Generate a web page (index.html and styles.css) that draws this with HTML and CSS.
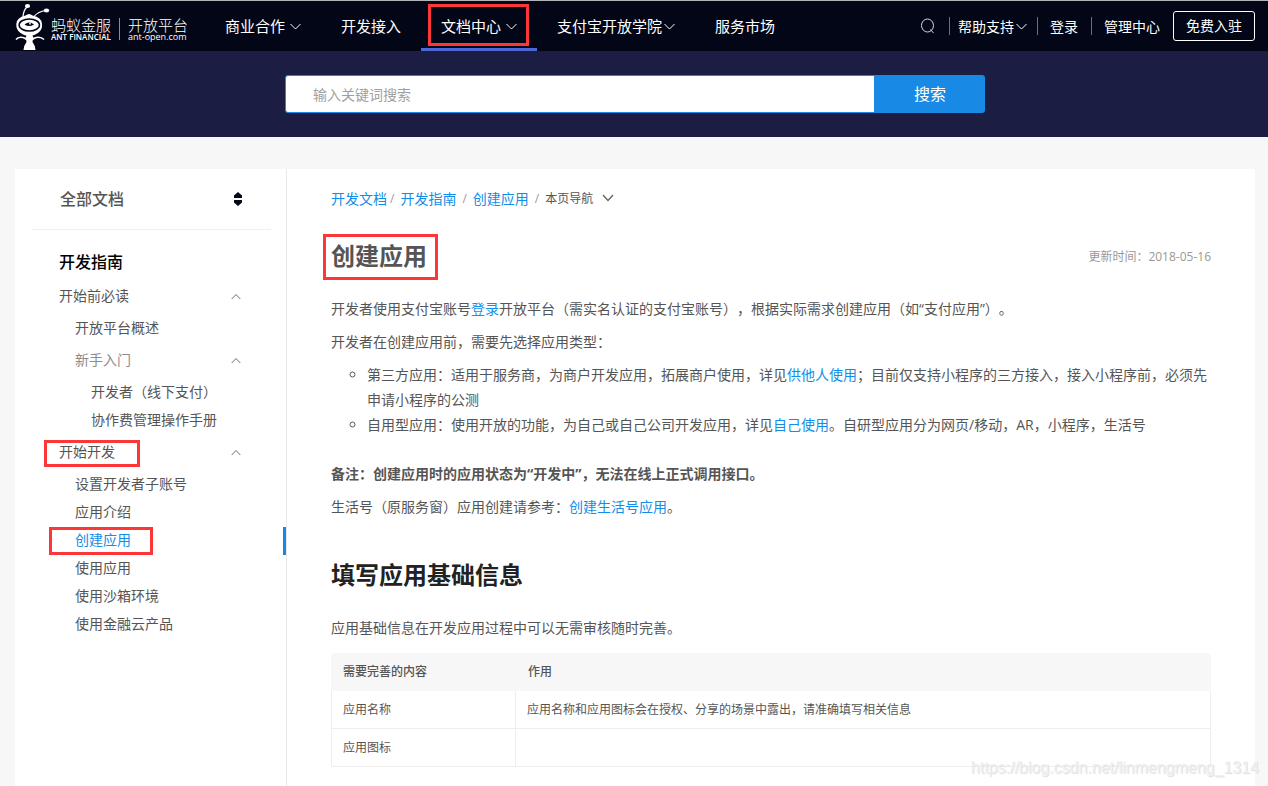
FILE: index.html
```html
<!DOCTYPE html>
<html lang="zh-CN">
<head>
<meta charset="utf-8">
<title>创建应用</title>
<link rel="stylesheet" href="styles.css">
</head>
<body>
<header class="topbar">
  <a class="logo" href="#">
    <svg class="logo-ant" viewBox="0 0 36 48" aria-hidden="true">
      <path d="M8 14 Q8.500 7 12 4 M19 13.500 Q23 8.500 31 7.500" fill="none" stroke="#fff" stroke-width="1.2"/>
      <ellipse cx="12.500" cy="3" rx="2.600" ry="2"/><ellipse cx="31.500" cy="7.500" rx="2.700" ry="1.900"/>
      <path d="M10.500 12.500 Q14 9.500 17.500 12.500 Q27 14.500 27 21 Q27.500 27 23 30 Q14 36.500 5.500 30 Q1 27 1.300 21 Q1.500 14.500 10.500 12.500Z"/>
      <ellipse cx="14.300" cy="22" rx="10.200" ry="6" fill="#fff" stroke="#030616" stroke-width="1.500"/>
      <path d="M9.500 21.500 Q14.300 17.500 19 21.500 Q14.300 24.500 9.500 21.500Z" fill="#030616"/>
      <circle cx="15" cy="20.700" r="0.900"/>
      <path d="M11.500 32h6q0 2 2 4-2.500 1-2 3 2.500 3 3 8h-12q.5-5 3-8 .5-2-2-3 2-2 2-4z"/>
      <path d="M1 36.500Q4 32.500 10.500 35.500M29 36.500Q25 32.500 18.500 35.500" fill="none" stroke="#fff" stroke-width="1.600"/>
    </svg>
    <span class="logo-name"><span class="logo-cn">蚂蚁金服</span><span class="logo-en logo-en-bold">ANT FINANCIAL</span></span>
    <span class="logo-name logo-product"><span class="logo-cn">开放平台</span><span class="logo-en">ant-open.com</span></span>
  </a>
  <nav class="nav">
    <a class="nav-item" href="#">商业合作<svg class="chev" viewBox="0 0 11 7"><path d="M.5 1l5 5 5-5"/></svg></a>
    <a class="nav-item" href="#">开发接入</a>
    <a class="nav-item nav-active" href="#"><span class="mark mark-nav">文档中心<svg class="chev" viewBox="0 0 11 7"><path d="M.5 1l5 5 5-5"/></svg></span></a>
    <a class="nav-item" href="#">支付宝开放学院<svg class="chev chev-tight" viewBox="0 0 11 7"><path d="M.5 1l5 5 5-5"/></svg></a>
    <a class="nav-item" href="#">服务市场</a>
  </nav>
  <div class="tools">
    <button class="icon-btn" type="button" aria-label="搜索">
      <svg class="search-icon" viewBox="0 0 16 16"><ellipse cx="7.500" cy="7.500" rx="6" ry="6.500"/><path d="M10.500 11.500l3 3.500"/></svg>
    </button>
    <a class="tool" href="#">帮助支持<svg class="chev chev-tight" viewBox="0 0 11 7"><path d="M.5 1l5 5 5-5"/></svg></a>
    <a class="tool tool-wide" href="#">登录</a>
    <a class="tool tool-wide" href="#">管理中心</a>
    <a class="join" href="#">免费入驻</a>
  </div>
</header>

<form class="search" role="search">
  <input class="search-input" type="text" placeholder="输入关键词搜索" aria-label="输入关键词搜索">
  <button class="search-btn" type="button">搜索</button>
</form>

<div class="panel">
  <aside class="side">
    <div class="side-head">
      <span>全部文档</span>
      <svg class="sorter" viewBox="0 0 10 14"><path d="M5 0l4 3.500V6H1V3.500zM5 14l4-3.500V8H1v2.500z"/></svg>
    </div>
    <h2 class="side-title">开发指南</h2>
    <a class="item group" href="#">开始前必读<svg class="up" viewBox="0 0 10 7"><path d="M.7 6l4.300-4.500L9.300 6"/></svg></a>
    <a class="item lv2" href="#">开放平台概述</a>
    <a class="item group lv2 muted" href="#">新手入门<svg class="up" viewBox="0 0 10 7"><path d="M.7 6l4.300-4.500L9.300 6"/></svg></a>
    <a class="item lv3" href="#">开发者（线下支付）</a>
    <a class="item lv3" href="#">协作费管理操作手册</a>
    <a class="item group" href="#"><span class="mark mark-group">开始开发</span><svg class="up" viewBox="0 0 10 7"><path d="M.7 6l4.300-4.500L9.300 6"/></svg></a>
    <a class="item lv2" href="#">设置开发者子账号</a>
    <a class="item lv2" href="#">应用介绍</a>
    <a class="item lv2 current" href="#"><span class="mark mark-current">创建应用</span></a>
    <a class="item lv2" href="#">使用应用</a>
    <a class="item lv2" href="#">使用沙箱环境</a>
    <a class="item lv2" href="#">使用金融云产品</a>
  </aside>

  <main class="doc">
    <nav class="crumbs">
      <a href="#">开发文档</a><span class="slash slash-first">/</span><a href="#">开发指南</a><span class="slash">/</span><a href="#">创建应用</a><span class="slash">/</span><button class="page-nav" type="button">本页导航<svg class="page-chev" viewBox="0 0 12 8"><path d="M1 1l5 5.500L11 1"/></svg></button>
    </nav>
    <div class="title-row">
      <h1 class="title"><span class="mark mark-title">创建应用</span></h1>
      <span class="updated">更新时间：2018-05-16</span>
    </div>
    <p>开发者使用支付宝账号<a href="#">登录</a>开放平台（需实名认证的支付宝账号），根据实际需求创建应用（如“支付应用”）。</p>
    <p>开发者在创建应用前，需要先选择应用类型：</p>
    <ul class="types">
      <li>第三方应用：适用于服务商，为商户开发应用，拓展商户使用，详见<a href="#">供他人使用</a>；目前仅支持小程序的三方接入，接入小程序前，必须先申请小程序的公测</li>
      <li>自用型应用：使用开放的功能，为自己或自己公司开发应用，详见<a href="#">自己使用</a>。自研型应用分为网页/移动，AR，小程序，生活号</li>
    </ul>
    <p><strong>备注：创建应用时的应用状态为“开发中”，无法在线上正式调用接口。</strong></p>
    <p>生活号（原服务窗）应用创建请参考：<a href="#">创建生活号应用</a>。</p>
    <h2 class="section">填写应用基础信息</h2>
    <p>应用基础信息在开发应用过程中可以无需审核随时完善。</p>
    <table class="info">
      <thead><tr><th class="col-name" scope="col">需要完善的内容</th><th scope="col">作用</th></tr></thead>
      <tbody>
        <tr><td>应用名称</td><td>应用名称和应用图标会在授权、分享的场景中露出，请准确填写相关信息</td></tr>
        <tr><td>应用图标</td><td></td></tr>
      </tbody>
    </table>
  </main>
</div>
<div class="watermark">https://blog.csdn.net/linmengmeng_1314</div>
</body>
</html>
```

FILE: styles.css
```css
* { box-sizing: border-box; }

body {
  margin: 0;
  min-height: 100vh;
  display: flex;
  flex-direction: column;
  position: relative;
  background: #f7f7f7;
  color: #555;
  font: 14px/25px "Open Sans", "Noto Sans CJK SC", sans-serif;
  text-spacing-trim: space-all;
}

a { color: #108ee9; text-decoration: none; }
button, input { font: inherit; }
svg { flex: none; }

/* Top bar */
.topbar {
  display: flex;
  height: 51px;
  padding: 0 13px 0 15px;
  border-top: 1px solid #b4b4b8;
  background: #030616;
}

.logo { display: flex; width: 190px; color: #fff; white-space: nowrap; }
.logo-ant { width: 36px; height: 48px; margin-top: 2px; fill: #fff; }
.logo-name { display: flex; flex-direction: column; height: 22px; margin-top: 17px; }
.logo-product { margin-left: 8px; padding-left: 8px; border-left: 1px solid #8a8b93; }
.logo-cn { font-size: 15px; font-weight: 300; line-height: 14px; }
.logo-en { font-size: 9px; line-height: 9px; }
.logo-en-bold { font-size: 8px; font-weight: 600; }

.nav { display: flex; }
.nav-item {
  display: flex;
  align-items: center;
  padding: 4px 20px 0;
  border-bottom: 3px solid transparent;
  color: #fff;
  font-size: 15px;
  white-space: nowrap;
}
.nav-active { border-bottom-color: #4f68d8; }
.chev { width: 11px; height: 7px; margin-left: 5px; fill: none; stroke: #fff; }
.chev-tight { margin-left: 2px; }

.tools { display: flex; align-items: center; margin-left: auto; white-space: nowrap; }
.icon-btn { display: flex; padding: 0 13px 0 0; border: 0; background: none; }
.search-icon { width: 16px; height: 16px; fill: none; stroke: #d8d8dc; }
.tool {
  display: flex;
  align-items: center;
  height: 18px;
  padding: 0 10px 0 8px;
  border-left: 1px solid #6d6e77;
  color: #fff;
}
.tool-wide { padding: 0 13px 0 12px; }
.join {
  height: 30px;
  padding: 0 12px;
  border: 1px solid #fff;
  border-radius: 3px;
  color: #fff;
  line-height: 28px;
}

/* Search band */
.search {
  display: flex;
  justify-content: center;
  padding: 24px 0 24px 2px;
  background: #1b1d42;
}
.search-input {
  width: 590px;
  height: 38px;
  padding: 0 27px;
  border: 1px solid #188ae6;
  border-radius: 3px 0 0 3px;
  background: #fff;
  color: #555;
}
.search-input::placeholder { color: #a0a0a0; }
.search-btn {
  width: 110px;
  border: 0;
  border-radius: 0 3px 3px 0;
  background: #188ae6;
  color: #fff;
  font-size: 16px;
}

/* Panel */
.panel { flex: 1; display: flex; margin: 32px 13px 0 15px; background: #fff; }

.side {
  display: flex;
  flex: none;
  flex-direction: column;
  width: 272px;
  border-right: 1px solid #e9e9e9;
}
.side-head {
  display: flex;
  align-items: center;
  justify-content: space-between;
  height: 61px;
  margin: 0 15px 0 16px;
  padding: 0 28px 0 29px;
  border-bottom: 1px solid #f0f0f0;
  font-size: 16px;
  font-weight: 500;
}
.sorter { width: 10px; height: 14px; fill: #030616; }
.side-title {
  margin: 18px 0 3px 44px;
  color: #000;
  font-size: 16px;
  font-weight: 500;
  line-height: 28px;
}
.item {
  display: flex;
  align-items: center;
  justify-content: space-between;
  height: 28px;
  padding: 0 45px 2px 44px;
  color: #555;
  line-height: 24px;
}
.group { margin: 4px 0; }
.lv2 { padding-left: 60px; }
.lv3 { padding-left: 76px; }
.muted { color: #8c8c8c; }
.current { border-right: 3px solid #188ae6; color: #108ee9; }
.up { width: 10px; height: 7px; fill: none; stroke: #7a6a60; }

/* Document */
.doc { flex: 1; min-width: 0; padding: 17px 44px; }
.doc p { margin: 0 0 8px; }
.crumbs { display: flex; align-items: center; height: 24px; margin-bottom: 28px; }
.slash { padding: 0 6px; color: #999; font-size: 12px; }
.slash-first { padding: 0 6px 0 3px; }
.page-nav {
  display: flex;
  align-items: center;
  gap: 9px;
  padding: 0;
  border: 0;
  background: none;
  color: #555;
  font-size: 12px;
}
.page-chev { width: 12px; height: 8px; fill: none; stroke: #666; stroke-width: 1.400; }

.title-row {
  display: flex;
  align-items: center;
  justify-content: space-between;
  margin-bottom: 22px;
}
.title, .section { margin: 0; font-size: 24px; font-weight: 700; line-height: 36px; }
.updated { color: #999; font-size: 12px; }
.types { margin: 0 0 24px; padding-left: 36px; list-style: circle; }
.section { margin: 38px 0 22px; color: #222; }

.info {
  width: 100%;
  margin-top: 13px;
  border-spacing: 0;
  font-size: 12px;
  line-height: 18px;
}
.info th { height: 38px; padding: 0 12px; background: #f7f7f7; font-weight: 500; text-align: left; }
.info th:first-child { border-radius: 4px 0 0 0; }
.info th:last-child { border-radius: 0 4px 0 0; }
.info td { height: 38px; padding: 0 11px; border: 1px solid #eee; border-width: 0 1px 1px 0; }
.info td:first-child { border-left-width: 1px; }
.col-name { width: 185px; }

/* Highlight frames */
.mark { position: relative; display: inline-flex; align-items: center; }
.mark::after { content: ""; position: absolute; border: 3px solid #fb3737; }
.mark-nav::after { inset: -10px -12px -7px -13px; }
.mark-group::after { inset: 0 -25px -3px -15px; }
.mark-current::after { inset: -1px -22px -3px -26px; }
.mark-title::after { inset: -4px -11px -6px -8px; }

.watermark {
  position: absolute;
  right: 9px;
  bottom: 8px;
  color: #f0f0f0;
  font: 16px/20px "Liberation Sans", sans-serif;
  text-shadow: 1px 1px 1px #ddd;
}
```
